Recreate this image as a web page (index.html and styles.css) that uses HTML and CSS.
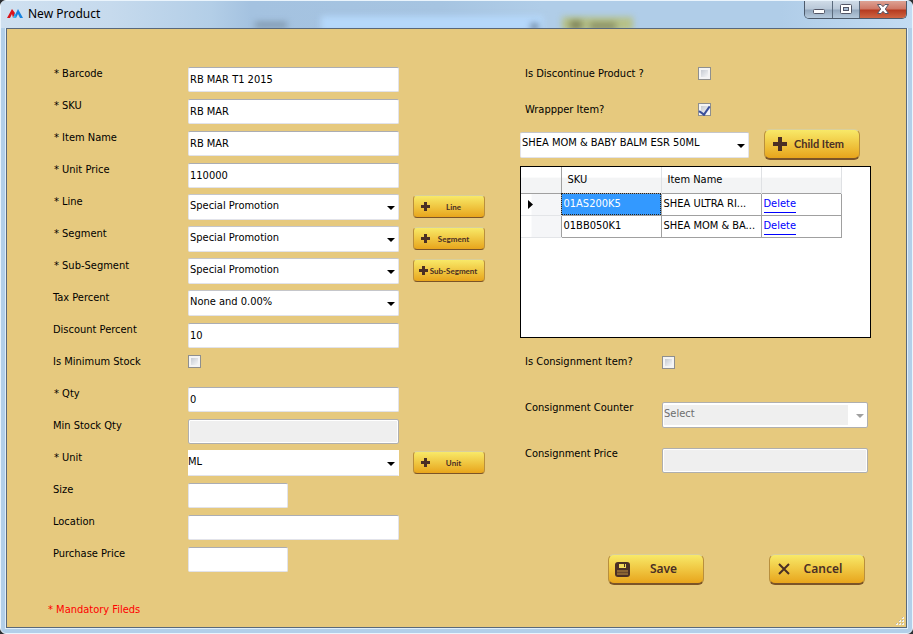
FILE: index.html
```html
<!DOCTYPE html>
<html lang="en">
<head>
<meta charset="utf-8">
<title>New Product</title>
<link rel="stylesheet" href="styles.css">
</head>
<body>
<div class="window">
  <header class="titlebar">
    <span class="ghost ghost-label"></span>
    <span class="ghost ghost-field"></span>
    <span class="ghost ghost-arrow"></span>
    <span class="ghost ghost-button"></span>
    <span class="ghost ghost-icon"></span>
    <span class="ghost ghost-text"></span>
    <svg class="app-icon" width="16" height="10" viewBox="0 0 16 10" aria-hidden="true">
      <path d="M0 9 5 0 8 4 6 9 5 5 3 9Z" fill="#d8141c"/>
      <path d="M7 4 8 6 11 0 16 9 13 9 11 5 9 9 7 9Z" fill="#1683e0"/>
      <path d="M6 9 8 5 9 9Z" fill="#35b8f0"/>
    </svg>
    <h1 class="title">New Product</h1>
    <div class="controls">
      <button class="control minimize" type="button" aria-label="Minimize">
        <svg width="14" height="16" viewBox="0 0 14 16"><rect x="1.500" y="9.500" width="11" height="4" rx="1" fill="#fff" stroke="#535666"/></svg>
      </button>
      <button class="control maximize" type="button" aria-label="Maximize">
        <svg width="14" height="16" viewBox="0 0 14 16"><rect x="1.500" y="4.500" width="11" height="9" rx="1" fill="#fff" stroke="#535666"/><rect x="4.500" y="7.500" width="5" height="3" fill="#a9bdd3" stroke="#535666"/></svg>
      </button>
      <button class="control close" type="button" aria-label="Close">
        <svg width="14" height="16" viewBox="0 0 14 16"><path d="M1.500 4.500H5L7 6.700 9 4.500H12.500L9.300 9 12.500 13.500H9L7 11.300 5 13.500H1.500L4.700 9Z" fill="#fff" stroke="#535666"/></svg>
      </button>
    </div>
  </header>

  <form class="client">
    <div class="columns">
      <section class="product">
        <label class="required" for="barcode">* Barcode</label>
        <input class="field" id="barcode" type="text" value="RB MAR T1 2015">

        <label class="required" for="sku">* SKU</label>
        <input class="field" id="sku" type="text" value="RB MAR">

        <label class="required" for="item-name">* Item Name</label>
        <input class="field" id="item-name" type="text" value="RB MAR">

        <label class="required" for="unit-price">* Unit Price</label>
        <input class="field" id="unit-price" type="text" value="110000">

        <label class="required" for="line">* Line</label>
        <div class="combo"><select id="line"><option>Special Promotion</option></select></div>
        <button class="gold small" type="button"><svg width="9" height="9" viewBox="0 0 9 9"><path d="M3 0h3v3h3v3H6v3H3V6H0V3h3z"/></svg><span>Line</span></button>

        <label class="required" for="segment">* Segment</label>
        <div class="combo"><select id="segment"><option>Special Promotion</option></select></div>
        <button class="gold small" type="button"><svg width="9" height="9" viewBox="0 0 9 9"><path d="M3 0h3v3h3v3H6v3H3V6H0V3h3z"/></svg><span>Segment</span></button>

        <label class="required" for="sub-segment">* Sub-Segment</label>
        <div class="combo"><select id="sub-segment"><option>Special Promotion</option></select></div>
        <button class="gold small snug" type="button"><svg width="9" height="9" viewBox="0 0 9 9"><path d="M3 0h3v3h3v3H6v3H3V6H0V3h3z"/></svg><span>Sub-Segment</span></button>

        <label for="tax">Tax Percent</label>
        <div class="combo"><select id="tax"><option>None and 0.00%</option></select></div>

        <label for="discount">Discount Percent</label>
        <input class="field" id="discount" type="text" value="10">

        <label for="is-minimum">Is Minimum Stock</label>
        <input class="check" id="is-minimum" type="checkbox">

        <label class="required" for="qty">* Qty</label>
        <input class="field" id="qty" type="text" value="0">

        <label for="min-qty">Min Stock Qty</label>
        <input class="field" id="min-qty" type="text" disabled>

        <label class="required" for="unit">* Unit</label>
        <div class="combo flat"><select id="unit"><option>ML</option></select></div>
        <button class="gold small" type="button"><svg width="9" height="9" viewBox="0 0 9 9"><path d="M3 0h3v3h3v3H6v3H3V6H0V3h3z"/></svg><span>Unit</span></button>

        <label for="size">Size</label>
        <input class="field short" id="size" type="text">

        <label for="location">Location</label>
        <input class="field" id="location" type="text">

        <label for="purchase">Purchase Price</label>
        <input class="field short" id="purchase" type="text">
      </section>

      <section class="extras">
        <div class="flags">
          <label for="discontinue">Is Discontinue Product ?</label>
          <input class="check" id="discontinue" type="checkbox">
          <label for="wrapper">Wrappper Item?</label>
          <input class="check" id="wrapper" type="checkbox" checked>
        </div>

        <div class="picker">
          <div class="combo"><select aria-label="Child item"><option>SHEA MOM &amp; BABY BALM ESR 50ML</option></select></div>
          <button class="gold child" type="button"><svg width="14" height="14" viewBox="0 0 14 14"><path d="M5 0h4v5h5v4H9v5H5V9H0V5h5z"/></svg><span>Child Item</span></button>
        </div>

        <div class="grid-box">
          <table class="items">
            <colgroup><col class="c-mark"><col class="c-text"><col class="c-text"><col class="c-link"></colgroup>
            <thead>
              <tr><th></th><th>SKU</th><th>Item Name</th><th></th></tr>
            </thead>
            <tbody>
              <tr>
                <td class="mark"><svg width="5" height="9" viewBox="0 0 5 9"><path d="M0 0 5 4.500 0 9Z"/></svg></td>
                <td class="selected">01AS200K5</td>
                <td>SHEA ULTRA RI...</td>
                <td><a href="#">Delete</a></td>
              </tr>
              <tr>
                <td class="mark"></td>
                <td>01BB050K1</td>
                <td>SHEA MOM &amp; BA...</td>
                <td><a href="#">Delete</a></td>
              </tr>
            </tbody>
          </table>
        </div>

        <div class="consignment">
          <label for="is-consignment">Is Consignment Item?</label>
          <input class="check" id="is-consignment" type="checkbox">
          <label for="counter">Consignment Counter</label>
          <div class="combo off"><select id="counter" disabled><option>Select</option></select></div>
          <label for="consignment-price">Consignment Price</label>
          <input class="field" id="consignment-price" type="text" disabled>
        </div>

        <div class="actions">
          <button class="gold save" type="submit"><svg width="15" height="15" viewBox="0 0 15 15"><rect width="15" height="15" rx="3"/><path d="M4 2h7v4H4z" fill="#f3d95a"/><path d="M9 2h1v3H9z" fill="#4a2f25"/><path d="M2 8h11v5H2z" fill="#8a6433"/><path d="M2 10h11v1H2z" fill="#6b4a2b"/></svg><span>Save</span></button>
          <button class="gold" type="button"><svg width="12" height="12" viewBox="0 0 12 12"><path d="M1 1 11 11M11 1 1 11" stroke="#4a2f25" stroke-width="2"/></svg><span>Cancel</span></button>
        </div>
      </section>
    </div>

    <footer class="status">
      <p class="note">* Mandatory Fileds</p>
      <svg class="grip" width="11" height="11" viewBox="0 0 11 11" aria-hidden="true">
        <path d="M7 1h2v2H7zM4 4h2v2H4zM7 4h2v2H7zM1 7h2v2H1zM4 7h2v2H4zM7 7h2v2H7z" fill="#f6f4ee"/>
        <path d="M7 1h1v1H7zM4 4h1v1H4zM7 4h1v1H7zM1 7h1v1H1zM4 7h1v1H4zM7 7h1v1H7z" fill="#b5b3b0"/>
      </svg>
    </footer>
  </form>
</div>
</body>
</html>
```
FILE: styles.css
```css
* { box-sizing: border-box; }

body {
  margin: 0;
  background: #2c2f33;
  color: #000;
  font: 11px/16px "DejaVu Sans Condensed", "DejaVu Sans", sans-serif;
}

input, select, button { font: inherit; color: inherit; margin: 0; }
label, .note { white-space: nowrap; }

.window {
  display: flex;
  flex-direction: column;
  min-height: 100vh;
  padding: 0 5px 5px;
  border: 1px solid #eaf4fc;
  border-radius: 6px;
  background: #b2cfe9;
  overflow: hidden;
}

/* Title bar with blurred shapes showing through the glass */
.titlebar {
  position: relative;
  display: flex;
  align-items: center;
  height: 27px;
  margin: 0 -5px;
  padding: 0 5px 2px 6px;
  overflow: hidden;
  background: linear-gradient(90deg, #cfe0f0 0, #c6daed 110px, #b3cee7 210px, #a4c2e0 250px, #a6c4e1 440px, #b0cde8 540px, #b0cde8 780px, #c3dcf3 100%);
}
.ghost { position: absolute; filter: blur(3px); }
.ghost-label { left: 254px; top: 21px; width: 32px; height: 6px; background: #7f97ad; }
.ghost-field { left: 320px; top: 15px; width: 222px; height: 16px; background: #b5d8fb; }
.ghost-arrow { left: 530px; top: 23px; width: 7px; height: 5px; background: #52677e; }
.ghost-button { left: 561px; top: 16px; width: 71px; height: 14px; background: #b6c187; }
.ghost-icon { left: 569px; top: 20px; width: 12px; height: 8px; background: #7c8157; }
.ghost-text { left: 589px; top: 22px; width: 26px; height: 6px; background: #83885f; }
.app-icon { margin-right: 5px; }
.title {
  flex: 1;
  margin: 0;
  font: 12px/18px "Noto Sans", sans-serif;
}

.controls {
  display: flex;
  align-self: flex-start;
  height: 18px;
  border: 1px solid #4c5a6b;
  border-top: 0;
  border-radius: 0 0 5px 5px;
  overflow: hidden;
}
.control {
  display: flex;
  justify-content: center;
  width: 28px;
  padding: 0;
  border: 0;
  border-right: 1px solid #5b6b7d;
  background: linear-gradient(#cfdbe7 0, #b9c8d8 8px, #94a8bd 9px, #b5c9dc 100%);
}
.control svg { margin-top: -1px; }
.control.maximize { width: 27px; }
.control.close {
  width: 46px;
  border-right: 0;
  background: linear-gradient(#dda294 0, #cf7765 8px, #b53a20 9px, #cf6543 100%);
}

.client {
  flex: 1;
  display: flex;
  flex-direction: column;
  justify-content: space-between;
  border: 1px solid #59687a;
  box-shadow: 0 0 0 1px #dfeefa;
  background: #e6c97e;
}
.columns {
  display: grid;
  grid-template-columns: 432fr 351fr;
  gap: 35px;
  padding: 37px 35px 0 46px;
}

/* Left column */
.product {
  display: grid;
  grid-template-columns: 135px minmax(0, 1fr) 72px;
  grid-auto-rows: 32px;
  align-items: start;
}
.product > label { grid-column: 1; }
.product > .field, .product > .combo, .product > .check { grid-column: 2; margin-right: 14px; }
.product > .gold { grid-column: 3; }
.required { padding-left: 1px; }

.field {
  width: auto;
  min-width: 0;
  height: 25px;
  margin-top: 1px;
  padding: 0 1px;
  border: 1px solid #e2e3ea;
  border-top-color: #abadb3;
  border-radius: 2px;
  background: #fff;
}
.field:disabled {
  border-color: #afafaf;
  background: #efefef;
  box-shadow: inset 0 0 0 1px #fff;
}
.field.short { width: 100px; }

.combo { position: relative; }
.combo::after {
  content: "";
  position: absolute;
  right: 4px;
  top: 12px;
  border: 4px solid transparent;
  border-top-color: #000;
  border-bottom: 0;
  pointer-events: none;
}
.combo select {
  display: block;
  appearance: none;
  width: 100%;
  height: 26px;
  padding: 0 16px 3px 1px;
  border: 1px solid #e2e3ea;
  border-top-color: #c5c6ca;
  border-radius: 2px;
  background: #fff;
}
.combo.flat select { padding-left: 0; border-color: #fff #fff #e2e3ea; border-left: 0; border-radius: 0; }
.combo.off::after { border-top-color: #a0a0a0; }
.combo.off select {
  opacity: 1;
  border-color: #afafaf;
  color: #6d6d6d;
  background: linear-gradient(#efefef, #efefef) 1px 2px / calc(100% - 20px) 20px no-repeat #fff;
}

.check {
  appearance: none;
  display: grid;
  width: 13px;
  height: 13px;
  border: 1px solid #8e8f8f;
  background: linear-gradient(135deg, #b9bfc8, #f4f5f6 80%);
  box-shadow: inset 0 0 0 2px #f4f4f4;
}
.product > .check { margin-top: 1px; }
.check:checked::after {
  content: "";
  width: 5px;
  height: 9px;
  margin: 0 auto;
  border: solid #3a4f9b;
  border-width: 0 2px 2px 0;
  transform: rotate(35deg);
}

/* Gold push buttons */
.gold {
  display: flex;
  align-items: center;
  width: 96px;
  height: 31px;
  padding: 0 8px;
  border: 1px solid #b98f3c;
  border-top-color: #d9cf9c;
  border-bottom: 2px solid #7b5428;
  border-radius: 6px;
  background: linear-gradient(#f8e968, #e8a51c);
  color: #4a2f25;
  font: 600 12px/16px "Noto Sans", sans-serif;
  white-space: nowrap;
}
.gold svg { flex: none; fill: #4a2f25; }
.gold span { flex: 1; text-align: center; }
.gold.child { font: 700 11px/16px Lato, sans-serif; }
.gold.save { padding: 0 6px; }
.gold.small {
  width: 72px;
  height: 23px;
  margin-top: 1px;
  padding: 0 7px;
  border-bottom-width: 1px;
  border-radius: 4px;
  font: 700 8px/10px Lato, sans-serif;
}
.gold.snug { padding: 0 5px; }

/* Right column */
.extras { display: flex; flex-direction: column; }
.flags {
  display: grid;
  grid-template-columns: 173px 1fr;
  grid-auto-rows: 36px 27px;
  padding-left: 5px;
}
.flags .check { margin-top: 1px; }
.picker { display: flex; gap: 15px; align-items: center; margin-bottom: 6px; }
.picker .combo { flex: 1; }
.picker .gold { margin-right: 11px; }

.grid-box { height: 172px; border: 1px solid #000; background: #fff; }
.items { table-layout: fixed; width: 320px; border-collapse: collapse; }
.c-mark { width: 40px; }
.c-text { width: 100px; }
.c-link { width: 80px; }
.items th, .items td { padding: 0 2px; text-align: left; white-space: nowrap; overflow: hidden; }
.items th {
  height: 26px;
  padding-left: 6px;
  border: solid #dfe1e4;
  border-width: 0 1px 0 0;
  background: linear-gradient(#fff 40%, #f3f4f5 41%);
  font-weight: normal;
}
.items th:first-child { border-right-color: #a0a0a0; }
.items td { height: 22px; border: 1px solid #a0a0a0; }
.items td.mark {
  padding-left: 7px;
  border-left: 0;
  border-bottom-color: #e3e5e8;
  background: linear-gradient(90deg, #fff 10px, #f5f6f8 11px);
}
.mark svg { display: block; }
.items td.selected { background: #3399ff; color: #fff; outline: 1px dotted #222; outline-offset: -1px; }
.items a { display: inline-block; border-bottom: 1px solid #00f; color: #00f; line-height: 16px; text-decoration: none; }

.consignment {
  display: grid;
  grid-template-columns: 137px 1fr;
  grid-auto-rows: 46px;
  align-items: start;
  margin: 16px 3px 0 0;
  padding-left: 5px;
}
.consignment .check, .consignment .combo, .consignment .field { margin-top: 2px; }

.actions { display: flex; justify-content: space-between; margin: 62px 6px 0 88px; }

.status { display: flex; align-items: flex-end; justify-content: space-between; padding-left: 41px; }
.note { margin: 0 0 9px; color: #f00; }
```
